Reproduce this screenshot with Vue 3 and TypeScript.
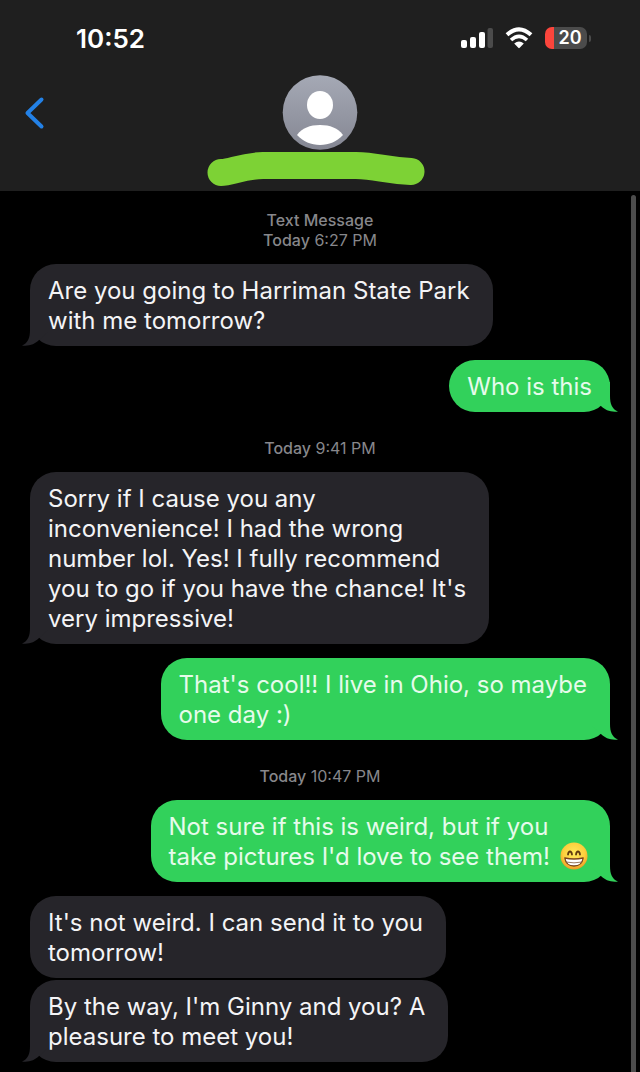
<script setup lang="ts">
interface Message {
  lines: string[]
  sent?: boolean
  tail?: boolean
  emoji?: boolean
}

interface Group {
  caption?: string
  day: string
  time: string
  messages: Message[]
}

const groups: Group[] = [
  {
    caption: 'Text Message',
    day: 'Today',
    time: '6:27 PM',
    messages: [
      { lines: ['Are you going to Harriman State Park', 'with me tomorrow?'], tail: true },
      { lines: ['Who is this'], sent: true, tail: true },
    ],
  },
  {
    day: 'Today',
    time: '9:41 PM',
    messages: [
      {
        lines: [
          'Sorry if I cause you any',
          'inconvenience! I had the wrong',
          'number lol. Yes! I fully recommend',
          "you to go if you have the chance! It's",
          'very impressive!',
        ],
        tail: true,
      },
      { lines: ["That's cool!! I live in Ohio, so maybe", 'one day :)'], sent: true, tail: true },
    ],
  },
  {
    day: 'Today',
    time: '10:47 PM',
    messages: [
      {
        lines: ['Not sure if this is weird, but if you', "take pictures I'd love to see them!"],
        sent: true,
        tail: true,
        emoji: true,
      },
      { lines: ["It's not weird. I can send it to you", 'tomorrow!'] },
      { lines: ["By the way, I'm Ginny and you? A", 'pleasure to meet you!'], tail: true },
    ],
  },
]
</script>

<template>
  <div class="screen">
    <header class="header">
      <div class="status">
        <span class="clock">10:52</span>
        <div class="indicators">
          <svg class="signal" width="34" height="22" viewBox="0 0 34 22" aria-label="Signal">
            <rect x="0" y="13" width="6" height="8" rx="2" fill="#fff" />
            <rect x="9" y="10" width="6" height="11" rx="2" fill="#fff" />
            <rect x="18" y="5" width="6" height="16" rx="2" fill="#fff" />
            <rect x="26.500" y="1" width="5.500" height="20" rx="2" fill="#4b4b4b" />
          </svg>
          <svg class="wifi" width="30" height="22" viewBox="0 0 30 22" aria-label="Wi-Fi">
            <path d="M2 7.800 Q14 -3.200 26 7.800" fill="none" stroke="#fff" stroke-width="4" />
            <path d="M6 13 Q14 5.600 22 13" fill="none" stroke="#fff" stroke-width="3.600" />
            <path d="M9.200 16.600 Q14 12.600 18.800 16.600 L14.700 20.800 Q14 21.500 13.300 20.800 Z" fill="#fff" />
          </svg>
          <div class="battery"><span class="charge">20</span></div>
        </div>
      </div>
      <div class="contact">
        <button class="back" type="button" aria-label="Back">
          <svg width="22" height="34" viewBox="0 0 22 34">
            <path d="M18.500 3.500 L4.500 17 L18.500 30.500" fill="none" stroke="#2381e6" stroke-width="4" stroke-linecap="round" stroke-linejoin="round" />
          </svg>
        </button>
        <div class="person">
          <svg width="76" height="76" viewBox="0 0 76 76" aria-label="Contact">
            <defs>
              <linearGradient id="avatar" x1="0" y1="0" x2="0" y2="1">
                <stop offset="0" stop-color="#a5a9b5" />
                <stop offset="1" stop-color="#858793" />
              </linearGradient>
            </defs>
            <circle cx="38" cy="37.500" r="37.300" fill="url(#avatar)" />
            <ellipse cx="38" cy="30" rx="13" ry="14" fill="#fff" />
            <path d="M15 60 C20 53 28 50 38 50 C48 50 56 53 61 60 C55 66.500 47 70 38 70 C29 70 21 66.500 15 60 Z" fill="#fff" />
          </svg>
          <svg class="scribble" width="220" height="36" viewBox="0 0 220 36">
            <path d="M15 21.500 C25 21.500 36 15 57 14.500 H150 C172 15 177 19 205 20.500" fill="none" stroke="#7dd235" stroke-width="27" stroke-linecap="round" stroke-linejoin="round" />
          </svg>
        </div>
      </div>
    </header>

    <main class="thread">
      <section v-for="group in groups" :key="group.time" class="group">
        <p class="stamp">
          <span v-if="group.caption" class="strong caption">{{ group.caption }}</span>
          <span class="strong">{{ group.day }}</span> {{ group.time }}
        </p>
        <div
          v-for="(message, i) in group.messages"
          :key="i"
          class="bubble"
          :class="{ sent: message.sent, multi: message.lines.length > 1, emoji: message.emoji }"
        >
          <svg v-if="message.tail" class="tail" width="30" height="30" viewBox="0 0 30 30">
            <path d="M8 0 V14 C8 22 6 27 0 29.500 C7 30.500 13 28 17 24 L26 16 V0 Z" fill="currentColor" />
          </svg>
          <p class="text">
            <span v-for="(line, n) in message.lines" :key="n" class="line">{{ line }}<svg
              v-if="message.emoji && n === message.lines.length - 1"
              class="grin" width="28" height="28" viewBox="0 0 28 28" role="img" aria-label="Beaming face"
            >
              <defs>
                <radialGradient id="face" cx="0.5" cy="0.4" r="0.62">
                  <stop offset="0" stop-color="#ffe95c" />
                  <stop offset="0.65" stop-color="#fccf3c" />
                  <stop offset="1" stop-color="#ed9423" />
                </radialGradient>
              </defs>
              <circle cx="14" cy="14" r="13.500" fill="url(#face)" />
              <path d="M8 12.500 Q8.500 9.500 10 9.500 T12 12.500 M16 12.500 Q16.500 9.500 18 9.500 T20 12.500" fill="none" stroke="#5f390f" stroke-width="1.800" stroke-linecap="round" />
              <path d="M4.800 16 Q14 18 23.200 16 Q22 24 14 24 Q6 24 4.800 16 Z" fill="#fff" stroke="#7a451b" stroke-width="1.300" stroke-linejoin="round" />
              <path d="M6 20 Q14 21.700 22 20" fill="none" stroke="#8d6b50" stroke-width="0.900" />
            </svg></span>
          </p>
        </div>
      </section>
      <div class="scrollbar"></div>
    </main>
  </div>
</template>

<style>
body {
  margin: 0;
  background: #000;
}
</style>

<style scoped>
.screen {
  min-height: 100vh;
  display: flex;
  flex-direction: column;
  background: #000;
  color: #f4f4f6;
  font-family: Inter, "Liberation Sans", sans-serif;
}

.header {
  background: #1f1f1f;
  padding-bottom: 4px;
}

.status {
  display: flex;
  justify-content: space-between;
  align-items: center;
  height: 75px;
  padding: 0 49px 0 76px;
}

.clock {
  padding-top: 2px;
  color: #fff;
  font-size: 26px;
  font-weight: 600;
  line-height: 32px;
}

.indicators {
  display: flex;
  align-items: center;
  gap: 10px;
}

.battery {
  position: relative;
  width: 42px;
  height: 22px;
  margin-right: 4px;
  border-radius: 7px;
  background: linear-gradient(to right, #fb453c 9px, #4b4b4b 9px);
  text-align: center;
}

.battery::after {
  content: "";
  position: absolute;
  top: 8px;
  right: -4px;
  width: 2px;
  height: 7px;
  border-radius: 0 2px 2px 0;
  background: #4b4b4b;
}

.charge {
  display: block;
  padding-left: 8px;
  color: #fff;
  font-size: 18px;
  font-weight: 600;
  line-height: 22px;
}

.contact {
  display: grid;
  grid-template-columns: 1fr auto 1fr;
  align-items: start;
}

.back {
  justify-self: start;
  margin: 21px 0 0 23px;
  padding: 0;
  border: 0;
  background: none;
}

.back svg,
.person svg {
  display: block;
}

.person {
  display: flex;
  flex-direction: column;
  align-items: center;
  margin-right: 8px;
}

.person > :first-child {
  margin-left: 8px;
}

.thread {
  position: relative;
  flex: 1;
  padding: 19px 30px 9px;
}

.scrollbar {
  position: absolute;
  top: 4px;
  right: 4px;
  bottom: 0;
  width: 5px;
  border-radius: 3px 3px 0 0;
  background: #4c4c4c;
}

.group {
  display: flex;
  flex-direction: column;
  align-items: flex-start;
}

.group + .group {
  margin-top: 26px;
}

.stamp {
  align-self: stretch;
  margin: 0;
  color: #87878b;
  font-size: 16px;
  line-height: 20px;
  text-align: center;
}

.strong {
  font-weight: 500;
}

.caption {
  display: block;
}

.bubble {
  position: relative;
  margin-top: 14px;
  padding: 12px 18px 10px;
  border-radius: 26px;
  background: #26252a;
  color: #26252a;
}

.multi {
  padding-right: 23px;
}

.bubble:not(.sent) + .bubble:not(.sent) {
  margin-top: 2px;
}

.sent {
  align-self: flex-end;
  background: #32d15b;
  color: #32d15b;
}

.emoji {
  padding-right: 22px;
}

.tail {
  position: absolute;
  left: -8px;
  bottom: 0;
}

.sent .tail {
  left: auto;
  right: -8px;
  transform: scaleX(-1);
}

.text {
  position: relative;
  margin: 0;
  color: #f4f4f6;
  font-size: 24px;
  line-height: 30px;
}

.sent .text {
  color: #e6fbeb;
}

.line {
  display: block;
  white-space: nowrap;
}

.grin {
  margin-left: 10px;
  vertical-align: -5px;
}
</style>
